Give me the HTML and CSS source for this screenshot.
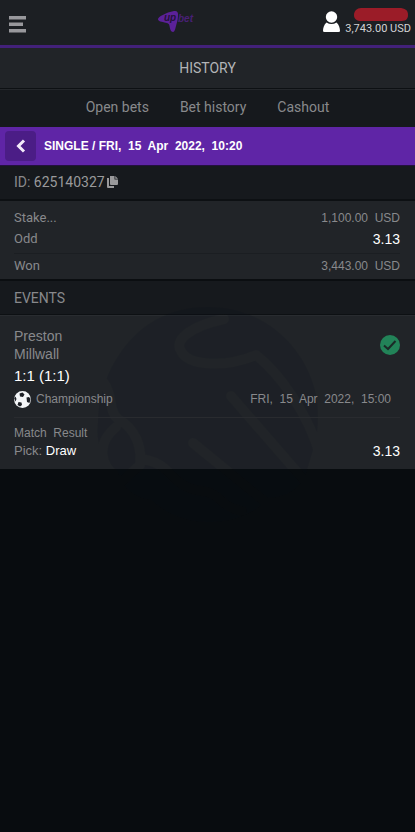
FILE: index.html
```html
<!DOCTYPE html>
<html lang="en">
<head>
<meta charset="utf-8">
<meta name="viewport" content="width=device-width, initial-scale=1">
<title>History</title>
<link rel="stylesheet" href="styles.css">
</head>
<body>
<header class="topbar">
  <button class="menu" aria-label="Menu">
    <svg width="17" height="17" viewBox="0 0 17 17" fill="#98989c"><path d="M0 0h17v3.500H0zM0 6.500h14v3.500H0zM0 13h17v3.500H0z"/></svg>
  </button>
  <a class="logo" href="#" aria-label="upbet">
    <svg width="38" height="24" viewBox="0 0 38 24">
      <path d="M1 9.500C.500 7 9 2.500 17 1c3-.5 4 1 4 3 0 4-.5 7-1.500 10-.8 3-1.500 8-3.500 8-2 0-3-3-3.500-6-.3-2-1-2.500-2.500-3C7 12 1.500 12 1 9.500z" fill="#5b2199"/>
      <text class="logo-up" x="7" y="11">up</text>
      <text class="logo-bet" x="21" y="12">bet</text>
    </svg>
  </a>
  <div class="account">
    <svg width="17" height="22" viewBox="0 0 17 22" fill="#fff"><ellipse cx="8.500" cy="6" rx="5.700" ry="5.800"/><path d="M3.500 11.500Q8.500 14.500 13.500 11.500C16 13.500 17 17 17 20q0 1-1.500 1h-14Q0 21 0 20c0-3 1-6.500 3.500-8.500z"/></svg>
    <div class="balance">
      <svg width="54" height="14" viewBox="0 0 54 14"><path d="M7 0h38c6 0 9 2 9 7s-3 6-8 6H7c-4 0-7-2-7-6s3-7 7-7z" fill="#9b1c28"/></svg>
      <span>3,743.00 USD</span>
    </div>
  </div>
</header>
<main class="page">
  <h1 class="title">HISTORY</h1>
  <nav class="tabs">
    <a href="#">Open bets</a>
    <a href="#">Bet history</a>
    <a href="#">Cashout</a>
  </nav>
  <div class="bet-bar">
    <button class="back" aria-label="Back">
      <svg width="10" height="14" viewBox="0 0 10 14" fill="none" stroke="#f3eafa" stroke-width="3"><path d="M8 1.500 2.500 7 8 12.500"/></svg>
    </button>
    <h2>SINGLE / FRI,  15  Apr  2022,  10:20</h2>
  </div>
  <div class="bet-id">
    <span>ID: <b>625140327</b></span>
    <button class="copy" aria-label="Copy ID">
      <svg width="11" height="12" viewBox="0 0 11 12" fill="#99999b"><path d="M0 2h2v8h5v2H1Q0 12 0 11zM3 0h4.500v3.500H11V8q0 1-1 1H4Q3 9 3 8zM8.300 0 11 2.700H8.300z"/></svg>
    </button>
  </div>
  <dl class="summary">
    <div class="row"><dt>Stake...</dt><dd>1,100.00  USD</dd></div>
    <div class="row"><dt>Odd</dt><dd class="odd">3.13</dd></div>
    <div class="row won"><dt>Won</dt><dd>3,443.00  USD</dd></div>
  </dl>
  <section class="events">
    <h2 class="events-title">EVENTS</h2>
    <article class="event">
      <div class="event-top">
        <div class="teams">
          <p>Preston</p>
          <p>Millwall</p>
          <p class="score">1:1 (1:1)</p>
        </div>
        <svg class="check" width="20" height="20" viewBox="0 0 20 20"><circle cx="10" cy="10" r="10" fill="#228358"/><path d="M4 10.500 8 14l7.500-8" fill="none" stroke="#1b2a27" stroke-width="2"/></svg>
      </div>
      <div class="league">
        <svg width="17" height="17" viewBox="0 0 17 17"><circle cx="8.500" cy="8.500" r="8.400" fill="#f4f6f8"/><g fill="#1c1f25"><path d="M5.500 2.500 8.500 1.500 10.500 3.500 9 6 6 5.500zM12.500 6.500l2.500-.5 1.500 2-1 4-2.500-1zM4.500 11l3 .5.500 2.500-2 1.500L3.500 14zM.2 7.500 1.500 5.500 2.500 8l-1 2.500z"/></g></svg>
        <span>Championship</span>
        <time>FRI,  15  Apr  2022,  15:00</time>
      </div>
      <div class="pick">
        <div>
          <p class="market">Match  Result</p>
          <p>Pick: <strong>Draw</strong></p>
        </div>
        <span class="odd">3.13</span>
      </div>
    </article>
    <svg class="watermark" width="224" height="220" viewBox="0 0 224 220" aria-hidden="true">
      <mask id="hands">
        <path d="M12 70C32 26 66 2 112 2c56 0 98 40 108 88 3 18 2 32 0 45l-11 36c-10 18-24 21-38 22-10 15-34 24-57 24-27 0-45-10-58-22-20-3-31-15-34-28C4 150 0 138 2 118 2 100 6 88 12 70z" fill="#fff"/>
        <g fill="none" stroke="#000" stroke-width="10" stroke-linecap="round" stroke-linejoin="round">
          <path d="M128 14C92 22 78 36 85 46c8 16 46 16 75 4 25 20 52 59 64 100"/>
          <path d="M135 91 208 175M97 138 178 204"/>
          <path d="M8 78c10 14 4 28 14 36 18 10 24 28 22 46l-22 20M44 154c34 3 28 28 62 32 20 2 14 14 40 20M20 122c-20 17-16 36 0 52"/>
        </g>
      </mask>
      <rect width="224" height="220" fill="#0a1018" fill-opacity=".15" mask="url(#hands)"/>
    </svg>
  </section>
</main>
</body>
</html>
```
FILE: styles.css
```css
* { box-sizing: border-box; }
body {
  margin: 0;
  min-height: 100vh;
  background: #080c0f;
  color: #88898c;
  font-family: Roboto, sans-serif;
  font-size: 13px;
  line-height: 18px;
}
h1, h2, p, dl, dd { margin: 0; font-weight: 400; }
button { padding: 0; border: 0; background: none; }
a { color: inherit; text-decoration: none; }
svg { display: block; flex: none; }

.topbar {
  display: grid;
  grid-template-columns: 1fr auto 1fr;
  align-items: center;
  height: 48px;
  padding: 0 4px 1px 9px;
  background: #1c1f23;
  border-bottom: 3px solid #43217a;
}
.menu { justify-self: start; padding-top: 4px; }
.logo { margin-right: 68px; }
.logo-up, .logo-bet {
  font: italic bold 10px "Liberation Sans", sans-serif;
}
.logo-up { fill: #241238; }
.logo-bet { fill: #482075; }
.account { display: flex; align-items: center; justify-self: end; gap: 5px; }
.balance {
  display: flex;
  flex-direction: column;
  align-items: center;
  color: #d3d3d5;
  font-size: 11px;
  line-height: 14px;
  white-space: nowrap;
}
.balance svg { margin-left: 6px; }

.title {
  padding: 11px 0;
  background: #212428;
  border-bottom: 1px solid #0d1013;
  color: #b3b4b7;
  font-size: 14px;
  text-align: center;
}
.tabs {
  display: flex;
  justify-content: center;
  gap: 31px;
  padding: 8px 0 11px;
  background: #16191d;
  border-top: 1px solid #24272b;
  font-size: 14px;
}
.bet-bar {
  display: flex;
  align-items: center;
  gap: 8px;
  padding: 4px 5px;
  background: #5f25a6;
  border-bottom: 1px solid #24103f;
}
.bet-bar h2 {
  color: #fff;
  font: bold 12px/18px "Liberation Sans", sans-serif;
  white-space: pre;
}
.back {
  display: grid;
  place-items: center;
  width: 31px;
  height: 30px;
  border-radius: 4px;
  background: #4b1d86;
}
.bet-id {
  display: flex;
  align-items: center;
  gap: 2px;
  padding: 7px 14px 8px;
  background: #16191d;
  font-size: 14px;
}
.bet-id b { color: #99999b; font-weight: 400; }

.summary {
  padding: 8px 15px 4px 14px;
  background: #212428;
  border-top: 2px solid #0d1013;
  border-bottom: 2px solid #0b0e11;
}
.row { display: flex; justify-content: space-between; padding: 0 0 3px; }
.row dd { font: 12px/18px "Liberation Sans", sans-serif; white-space: pre; }
.row .odd, .event .odd { color: #fff; font: 14px/18px "Liberation Sans", sans-serif; }
.won { padding: 3px 0 0; margin-top: 2px; border-top: 1px solid #1b1e22; }

.events { position: relative; }
.events-title {
  padding: 8px 14px 7px;
  background: #16191d;
  border-bottom: 1px solid #0d1013;
  font-size: 14px;
}
.event {
  padding: 11px 15px 9px 14px;
  background: #212428;
  border-top: 1px solid #292c30;
  font-family: "Liberation Sans", sans-serif;
}
/* Keep the text above the watermark. */
.event > div { position: relative; z-index: 1; }
.event-top { display: flex; justify-content: space-between; }
.teams { font-size: 14px; }
.teams .score { padding-top: 4px; color: #fff; font-size: 15px; }
.check { margin-top: 8px; }
.league {
  display: flex;
  align-items: center;
  gap: 5px;
  padding: 5px 9px 9px 0;
  border-bottom: 1px solid #292b2f;
  font-size: 12px;
}
.league time { margin-left: auto; white-space: pre; }
.pick {
  display: flex;
  align-items: flex-end;
  justify-content: space-between;
  padding-top: 6px;
  font-size: 13px;
}
.market { font-size: 12px; white-space: pre; }
.pick strong { color: #fff; font-weight: 400; }
.watermark {
  position: absolute;
  top: 24px;
  left: 50%;
  transform: translateX(-50%);
  pointer-events: none;
}
```
